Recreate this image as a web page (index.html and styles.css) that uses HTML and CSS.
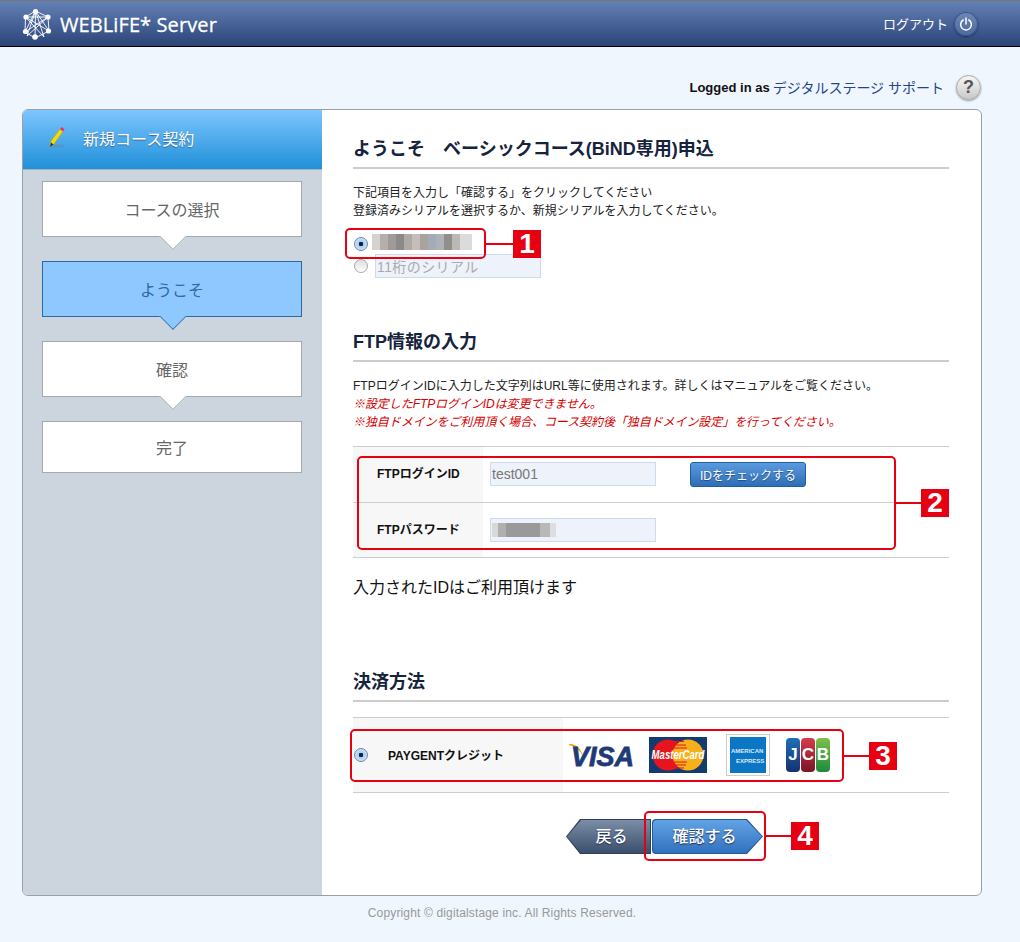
FILE: index.html
```html
<!DOCTYPE html>
<html lang="ja">
<head>
  <meta charset="UTF-8">
  <title>WEBLiFE* Server</title>
  <link rel="stylesheet" href="styles.css">
</head>
<body>
  <header class="topbar">
    <div class="brand">
      <svg class="brand-icon" width="30" height="32" viewBox="0 0 30 32" fill="none" stroke="#fff" stroke-width="0.9">
        <path d="M13.5 3 L3.5 9 L26 9 L13.5 3 L22 29 L3.5 9 M13.5 3 L5 28 L26 9 M3.5 9 L3 24 L13 30 L27 23 L26 9 M3 24 L26 9 M3.5 9 L27 23 M3 24 L13.5 3 L27 23 M13 30 L13.5 3"/>
        <g fill="#fff" stroke="none">
          <circle cx="13.5" cy="3.5" r="2.6"/><circle cx="4" cy="9" r="2.6"/><circle cx="26" cy="9" r="2.6"/>
          <circle cx="3.5" cy="23.5" r="2.6"/><circle cx="13" cy="29" r="2.8"/><circle cx="26.5" cy="23" r="2.6"/>
        </g>
      </svg>
      <span class="brand-name">WEBLiFE* Server</span>
    </div>
    <a class="logout">
      <span>ログアウト</span>
      <span class="power">
        <svg width="14" height="14" viewBox="0 0 14 14" fill="none" stroke="#fff" stroke-width="1.5" stroke-linecap="round">
          <path d="M4.2 3 A5.4 5.4 0 1 0 9.8 3"/><path d="M7 1 V7"/>
        </svg>
      </span>
    </a>
  </header>

  <div class="userbar">
    <span class="user-label">Logged in as</span>
    <a class="user-name">デジタルステージ サポート</a>
    <span class="help">?</span>
  </div>

  <div class="card">
    <aside class="sidebar">
      <div class="side-head">
        <svg width="20" height="24" viewBox="0 0 20 24">
          <ellipse cx="10" cy="20" rx="8" ry="1.6" fill="#5d8fb8" opacity="0.6"/>
          <path d="M3 21 L4 15 L13 3 L16 5.5 L7 18 Z" fill="#f5d90a" stroke="#b49a00" stroke-width="0.5"/>
          <path d="M3 21 L4 16.5 L6.5 18.5 Z" fill="#333"/>
          <path d="M13 3 L14.5 1 L17.5 3 L16 5.5 Z" fill="#e9327f"/>
        </svg>
        <span>新規コース契約</span>
      </div>
      <ol class="steps">
        <li class="step step-arrow">コースの選択</li>
        <li class="step step-arrow step-current">ようこそ</li>
        <li class="step step-arrow">確認</li>
        <li class="step step-last">完了</li>
      </ol>
    </aside>

    <main class="content">
      <h2 class="section-title">ようこそ　ベーシックコース(BiND専用)申込</h2>
      <p class="note">下記項目を入力し「確認する」をクリックしてください<br>登録済みシリアルを選択するか、新規シリアルを入力してください。</p>
      <div class="serial-row serial-saved">
        <span class="radio radio-on"></span>
        <span class="mosaic mosaic-serial"></span>
      </div>
      <div class="serial-row">
        <span class="radio"></span>
        <span class="field field-serial">11桁のシリアル</span>
      </div>

      <h2 class="section-title title-ftp">FTP情報の入力</h2>
      <p class="note">FTPログインIDに入力した文字列はURL等に使用されます。詳しくはマニュアルをご覧ください。<br>
        <em class="warn">※設定したFTPログインIDは変更できません。</em><br>
        <em class="warn">※独自ドメインをご利用頂く場合、コース契約後「独自ドメイン設定」を行ってください。</em></p>

      <div class="ftp-table">
        <div class="row row-first">
          <div class="row-label">FTPログインID</div>
          <div class="row-body">
            <span class="field">test001</span>
            <a class="check-btn">IDをチェックする</a>
          </div>
        </div>
        <div class="row">
          <div class="row-label">FTPパスワード</div>
          <div class="row-body">
            <span class="field"><span class="mosaic mosaic-pass"></span></span>
          </div>
        </div>
      </div>
      <p class="id-ok">入力されたIDはご利用頂けます</p>

      <h2 class="section-title title-pay">決済方法</h2>
      <div class="pay-table">
        <div class="pay-label">
          <span class="radio radio-on"></span>
          <span class="pay-name">PAYGENTクレジット</span>
        </div>
        <div class="pay-cards">
          <svg class="logo-visa" width="66" height="36" viewBox="0 -5 66 36">
            <path d="M0 2 C6 2 11 4 14 14 C11 8 6 5 0 3 Z" fill="#e8a51c"/>
            <text x="2" y="24" font-family="Liberation Sans" font-size="27" font-weight="700" font-style="italic" fill="#1f3a78" stroke="#1f3a78" stroke-width="0.8">VISA</text>
          </svg>
          <svg class="logo-mc" width="58" height="36" viewBox="0 0 58 36">
            <rect width="58" height="36" fill="#143a6e"/>
            <circle cx="19" cy="18" r="15.5" fill="#e5141e"/>
            <circle cx="39" cy="18" r="15.5" fill="#f7b01c"/>
            <path d="M23 4.5 H35 M21 8 H37 M20 11 H38 M20 25 H38 M21 28 H37 M23 31 H35" stroke="#e5141e" stroke-width="1.2"/>
            <text x="36.25" y="22" transform="scale(0.8 1)" text-anchor="middle" font-family="Liberation Sans" font-size="12" font-weight="700" font-style="italic" fill="#fff">MasterCard</text>
          </svg>
          <div class="logo-amex">
            <svg width="36" height="36" viewBox="0 0 36 36">
              <rect width="36" height="36" fill="#0a76c4"/>
              <text x="1" y="16" font-family="Liberation Sans" font-size="6" font-weight="700" fill="#dbeafa">AMERICAN</text>
              <text x="6" y="26" font-family="Liberation Sans" font-size="6" font-weight="700" fill="#dbeafa">EXPRESS</text>
            </svg>
          </div>
          <div class="logo-jcb">
            <span class="jcb-col jcb-j">J</span>
            <span class="jcb-col jcb-c">C</span>
            <span class="jcb-col jcb-b">B</span>
          </div>
        </div>
      </div>
      <div class="actions">
        <a class="arrow-btn btn-back"><span>戻る</span></a>
        <a class="arrow-btn btn-next"><span>確認する</span></a>
      </div>
    </main>

    <div class="mark mark-1"><span class="mark-box"></span><span class="mark-line"></span><b class="mark-num">1</b></div>
    <div class="mark mark-2"><span class="mark-box"></span><span class="mark-line"></span><b class="mark-num">2</b></div>
    <div class="mark mark-3"><span class="mark-box"></span><span class="mark-line"></span><b class="mark-num">3</b></div>
    <div class="mark mark-4"><span class="mark-box"></span><span class="mark-line"></span><b class="mark-num">4</b></div>
  </div>

  <footer class="copyright">Copyright © digitalstage inc. All Rights Reserved.</footer>
</body>
</html>
```

FILE: styles.css
```css
* {
  box-sizing: border-box;
}
body {
  margin: 0;
  height: 942px;
  overflow: hidden;
  background: #eff6fe;
  color: #111;
  font-family: "Liberation Sans", "Noto Sans CJK JP", sans-serif;
}

/* top bar */
.topbar {
  height: 47px;
  display: flex;
  align-items: center;
  justify-content: space-between;
  padding: 0 42px 0 22px;
  background: linear-gradient(to bottom, #6481b6 0%, #2b4478 100%);
  border-top: 1px solid #777;
  border-bottom: 1px solid #000;
}
.brand {
  display: flex;
  align-items: center;
  gap: 8px;
}
.brand-name {
  margin-top: 2px;
  color: #fff;
  font-family: "Open Sans", sans-serif;
  font-size: 20px;
  font-weight: 500;
  line-height: 24px;
  letter-spacing: 0.1px;
  -webkit-text-stroke: 0.3px #fff;
}
.logout {
  display: flex;
  align-items: center;
  gap: 6px;
  color: #fff;
  font-size: 13px;
}
.power {
  width: 24px;
  height: 24px;
  display: flex;
  align-items: center;
  justify-content: center;
  border-radius: 50%;
  background: linear-gradient(to bottom, #7088b5, #4c699e);
  box-shadow: 0 0 0 1px #3a5488 inset, 0 1px 2px #1c2f55;
}

/* logged in row */
.userbar {
  height: 62px;
  display: flex;
  align-items: center;
  justify-content: flex-end;
  padding: 18px 39px 0 0;
}
.user-label {
  font-size: 13px;
  font-weight: 700;
  margin-right: 3px;
}
.user-name {
  color: #24458c;
  font-size: 14px;
}
.help {
  width: 25px;
  height: 25px;
  margin-left: 12px;
  display: flex;
  align-items: center;
  justify-content: center;
  border-radius: 50%;
  background: linear-gradient(to bottom, #f6f6f6, #c9c9c9);
  border: 1px solid #a9a9a9;
  box-shadow: 0 1px 2px #999;
  color: #555;
  font-size: 18px;
  font-weight: 700;
}

/* card */
.card {
  position: relative;
  width: 960px;
  height: 787px;
  margin-left: 22px;
  display: flex;
  background: #fff;
  border: 1px solid #9aa0a8;
  border-radius: 6px;
  overflow: hidden;
}
.sidebar {
  width: 299px;
  flex: none;
  background: #ccd5de;
}
.side-head {
  height: 60px;
  display: flex;
  align-items: center;
  gap: 16px;
  padding: 0 0 4px 24px;
  background: linear-gradient(to bottom, #7dc5ff 0%, #2090d8 100%);
  border-bottom: 1px solid #a9b4be;
  color: #fff;
  font-size: 16px;
  text-shadow: 0 1px 1px #3a6c96;
}
.steps {
  list-style: none;
  margin: 11px 0 0 19px;
  padding: 0;
  width: 260px;
}
.step {
  position: relative;
  height: 56px;
  margin-bottom: 24px;
  display: flex;
  align-items: center;
  justify-content: center;
  background: #fff;
  border: 1px solid #a4a9ae;
  color: #666;
  font-size: 16px;
}
.step-last {
  height: 52px;
}
.step-arrow::after {
  content: "";
  position: absolute;
  left: 50%;
  bottom: -10px;
  width: 19px;
  height: 19px;
  margin-left: -9px;
  background: inherit;
  border-right: 1px solid #a4a9ae;
  border-bottom: 1px solid #a4a9ae;
  clip-path: polygon(100% 0, 100% 100%, 0 100%);
  transform: rotate(45deg);
}
.step-current {
  background: #8ec8ff;
  border-color: #2a6aa6;
  color: #2f6aa8;
}
.step-current::after {
  border-color: #2a6aa6;
}

/* main column */
.content {
  width: 596px;
  margin-left: 31px;
}
.section-title {
  margin: 0;
  padding: 28px 0 7px;
  font-size: 18px;
  font-weight: 700;
  line-height: 22px;
  color: #16233c;
  border-bottom: 2px solid #ccc;
}
.title-ftp {
  margin-top: 53px;
  padding-top: 0;
}
.title-pay {
  margin-top: 72px;
  padding-top: 0;
}
.note {
  margin: 15px 0 0;
  font-size: 12px;
  line-height: 18px;
  color: #222;
}
.warn {
  color: #d40000;
  letter-spacing: -0.07px;
}
.serial-row {
  display: flex;
  align-items: center;
  gap: 7px;
  padding-left: 1px;
}
.serial-saved {
  height: 21px;
  margin-top: 13px;
  gap: 4px;
}
.serial-saved .mosaic {
  margin-bottom: 3px;
}
.radio {
  width: 14px;
  height: 14px;
  flex: none;
  border-radius: 50%;
  border: 1px solid #aaa;
  background: linear-gradient(to bottom, #ddd, #fff);
}
.radio-on {
  border-color: #6f86a8;
  background: radial-gradient(circle, #12233f 0 2px, #a9cdf5 2.5px, #e3effc 100%);
}
.mosaic {
  display: block;
  height: 16px;
  filter: blur(0.6px);
}
.mosaic-serial {
  width: 100px;
  background: linear-gradient(to right, #d6d2d0 0 8%, #b5aeaa 8% 16%, #a09a98 16% 24%, #8a8a8a 24% 32%, #b0aaa6 32% 40%, #c4bdb8 40% 48%, #a9a3a0 48% 56%, #a3abb8 56% 64%, #aeb2b8 64% 72%, #8f8f8c 72% 80%, #bcb8b5 80% 88%, #dbdbdd 88% 100%);
}
.field {
  width: 166px;
  height: 24px;
  flex: none;
  padding: 0 1px;
  display: flex;
  align-items: center;
  background: #edf2fb;
  border: 1px solid #ccdcec;
  color: #777;
  font-size: 14px;
}
.field-serial {
  color: #aaa;
  letter-spacing: 0.4px;
}

/* ftp table */
.ftp-table {
  margin-top: 15px;
  border-top: 1px solid #ccc;
}
.row {
  display: flex;
  height: 55px;
  border-bottom: 1px solid #ccc;
}
.row-first {
  height: 56px;
}
.row-label {
  width: 130px;
  padding: 0 0 4px 24px;
  display: flex;
  align-items: center;
  background: #f7f7f7;
  font-size: 12px;
  font-weight: 700;
}
.row-body {
  display: flex;
  align-items: flex-start;
  padding: 15px 0 0 7px;
}
.check-btn {
  width: 116px;
  height: 25px;
  margin-left: 34px;
  display: flex;
  align-items: center;
  justify-content: center;
  border: 1px solid #1d5ea3;
  border-radius: 3px;
  background: linear-gradient(to bottom, #5a9be0, #2f6db5);
  color: #fff;
  font-size: 12px;
  text-shadow: 0 1px 1px #1d4b80;
}
.mosaic-pass {
  width: 64px;
  height: 14px;
  background: linear-gradient(to right, #d8d8d8 0 10%, #b0b0b0 10% 22%, #9a9a9a 22% 75%, #b8b8b8 75% 90%, #dedede 90% 100%);
}
.id-ok {
  margin: 19px 0 0;
  font-size: 16px;
  line-height: 22px;
}

/* payment */
.pay-table {
  display: flex;
  height: 76px;
  margin-top: 15px;
  border-top: 1px solid #ccc;
  border-bottom: 1px solid #ccc;
}
.pay-label {
  width: 210px;
  display: flex;
  align-items: center;
  gap: 20px;
  padding-left: 1px;
  background: #f7f7f7;
  font-size: 12px;
  font-weight: 700;
}
.pay-name {
  margin-bottom: 2px;
}
.pay-cards {
  display: flex;
  align-items: center;
  padding-left: 6px;
}
.logo-mc {
  margin-left: 14px;
}
.logo-amex {
  width: 44px;
  height: 42px;
  margin-left: 19px;
  display: flex;
  align-items: center;
  justify-content: center;
  background: #fff;
  border: 1px solid #ccc;
}
.logo-jcb {
  display: flex;
  gap: 1px;
  margin-left: 16px;
}
.jcb-col {
  width: 14px;
  height: 34px;
  display: flex;
  align-items: center;
  justify-content: center;
  border-radius: 4px;
  color: #fff;
  font-size: 17px;
  font-weight: 700;
}
.jcb-j {
  background: linear-gradient(to bottom, #1e6fb8, #16306f);
}
.jcb-c {
  background: linear-gradient(to bottom, #d83a4a, #7a1626);
}
.jcb-b {
  background: linear-gradient(to bottom, #7cc04a, #1c8a3c);
}

/* buttons */
.actions {
  display: flex;
  margin-top: 26px;
  padding-left: 213px;
}
.arrow-btn {
  position: relative;
  display: flex;
  align-items: center;
  justify-content: center;
  height: 35px;
  padding-bottom: 4px;
  color: #fff;
  font-size: 16px;
  font-weight: 500;
  text-shadow: 0 1px 1px #1c2f55;
}
.arrow-btn span {
  position: relative;
  z-index: 1;
}
.arrow-btn::before,
.arrow-btn::after {
  content: "";
  position: absolute;
}
.arrow-btn::before {
  inset: 0;
}
.arrow-btn::after {
  inset: 1px;
}
.btn-back {
  width: 85px;
  padding-left: 6px;
}
.btn-back::before,
.btn-back::after {
  clip-path: polygon(0 50%, 14px 0, 100% 0, 100% 100%, 14px 100%);
}
.btn-back::before {
  background: #2f3f58;
}
.btn-back::after {
  background: linear-gradient(to bottom, #7b8da6, #3a4f6d);
}
.btn-next {
  width: 111px;
  margin-left: 1px;
  padding-right: 6px;
}
.btn-next::before,
.btn-next::after {
  border-radius: 4px 0 0 4px;
  clip-path: polygon(0 0, calc(100% - 16px) 0, 100% 50%, calc(100% - 16px) 100%, 0 100%);
}
.btn-next::before {
  background: #245a9e;
}
.btn-next::after {
  background: linear-gradient(to bottom, #62a3e6, #3271bd);
}

/* red callouts over the form */
.mark {
  position: absolute;
  display: flex;
  align-items: center;
}
.mark-box {
  display: block;
  border: 2px solid #e60012;
  border-radius: 5px;
}
.mark-line {
  display: block;
  height: 2px;
  background: #e60012;
}
.mark-num {
  width: 28px;
  height: 28px;
  display: flex;
  align-items: center;
  justify-content: center;
  background: #e60012;
  color: #fff;
  font-size: 28px;
  font-weight: 700;
  line-height: 28px;
}
.mark-1 { left: 322px; top: 118px; }
.mark-1 .mark-box { width: 141px; height: 31px; }
.mark-1 .mark-line { width: 27px; }
.mark-2 { left: 334px; top: 346px; }
.mark-2 .mark-box { width: 539px; height: 94px; }
.mark-2 .mark-line { width: 25px; }
.mark-3 { left: 327px; top: 619px; }
.mark-3 .mark-box { width: 494px; height: 53px; }
.mark-3 .mark-line { width: 25px; }
.mark-4 { left: 621px; top: 701px; }
.mark-4 .mark-box { width: 122px; height: 50px; }
.mark-4 .mark-line { width: 25px; }

.copyright {
  width: 960px;
  margin: 9px 0 0 22px;
  text-align: center;
  color: #999;
  font-size: 12px;
  line-height: 16px;
  letter-spacing: 0.15px;
}
```
